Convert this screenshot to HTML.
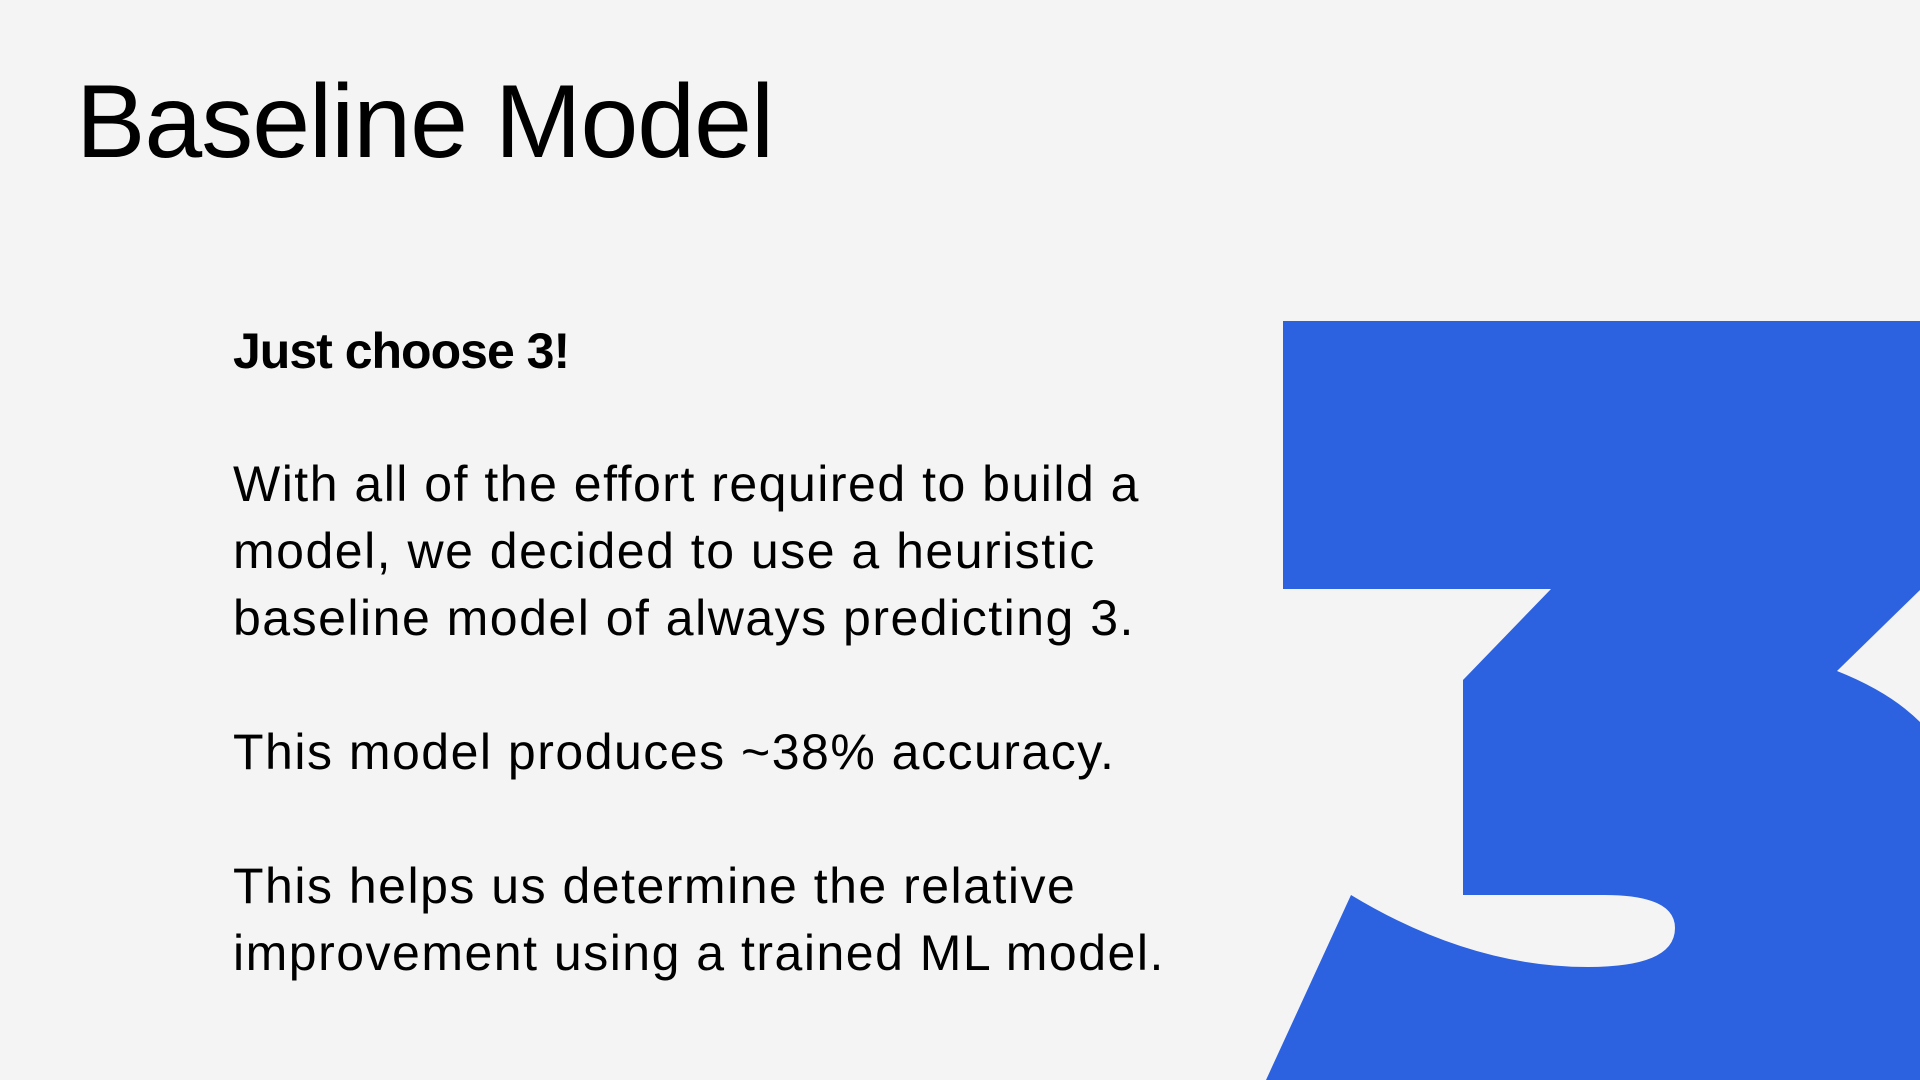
<!DOCTYPE html>
<html><head><meta charset="utf-8"><style>
html,body{margin:0;padding:0}
body{width:1920px;height:1080px;background:#f4f4f4;position:relative;overflow:hidden;font-family:"Liberation Sans",sans-serif;color:#000}
h1{position:absolute;left:76px;top:62px;margin:0;font-weight:400;font-size:104px;line-height:120px;letter-spacing:-1px}
.t{position:absolute;left:233px;font-size:50px;line-height:67px;white-space:nowrap;letter-spacing:1.5px}
svg{position:absolute;left:0;top:0}
</style></head><body>
<h1>Baseline Model</h1>
<div class="t" style="top:318px;font-weight:700;letter-spacing:-1px">Just choose 3!</div>
<div class="t" style="top:451px">With all of the effort required to build a<br>model, we decided to use a heuristic<br>baseline model of always predicting 3.</div>
<div class="t" style="top:719px">This model produces ~38% accuracy.</div>
<div class="t" style="top:853px">This helps us determine the relative<br>improvement using a trained ML model.</div>
<svg width="1920" height="1080" viewBox="0 0 1920 1080"><path fill="#2c62e0" d="M1283 321 L1920 321 L1920 590 L1837 671 Q1890 692 1920 722 L1920 1080 L1266 1080 L1351 895 Q1470 967 1588 967 Q1675 967 1675 928 Q1675 895 1604 895 L1463 895 L1463 680 L1551 589 L1283 589 Z"/></svg>
</body></html>
